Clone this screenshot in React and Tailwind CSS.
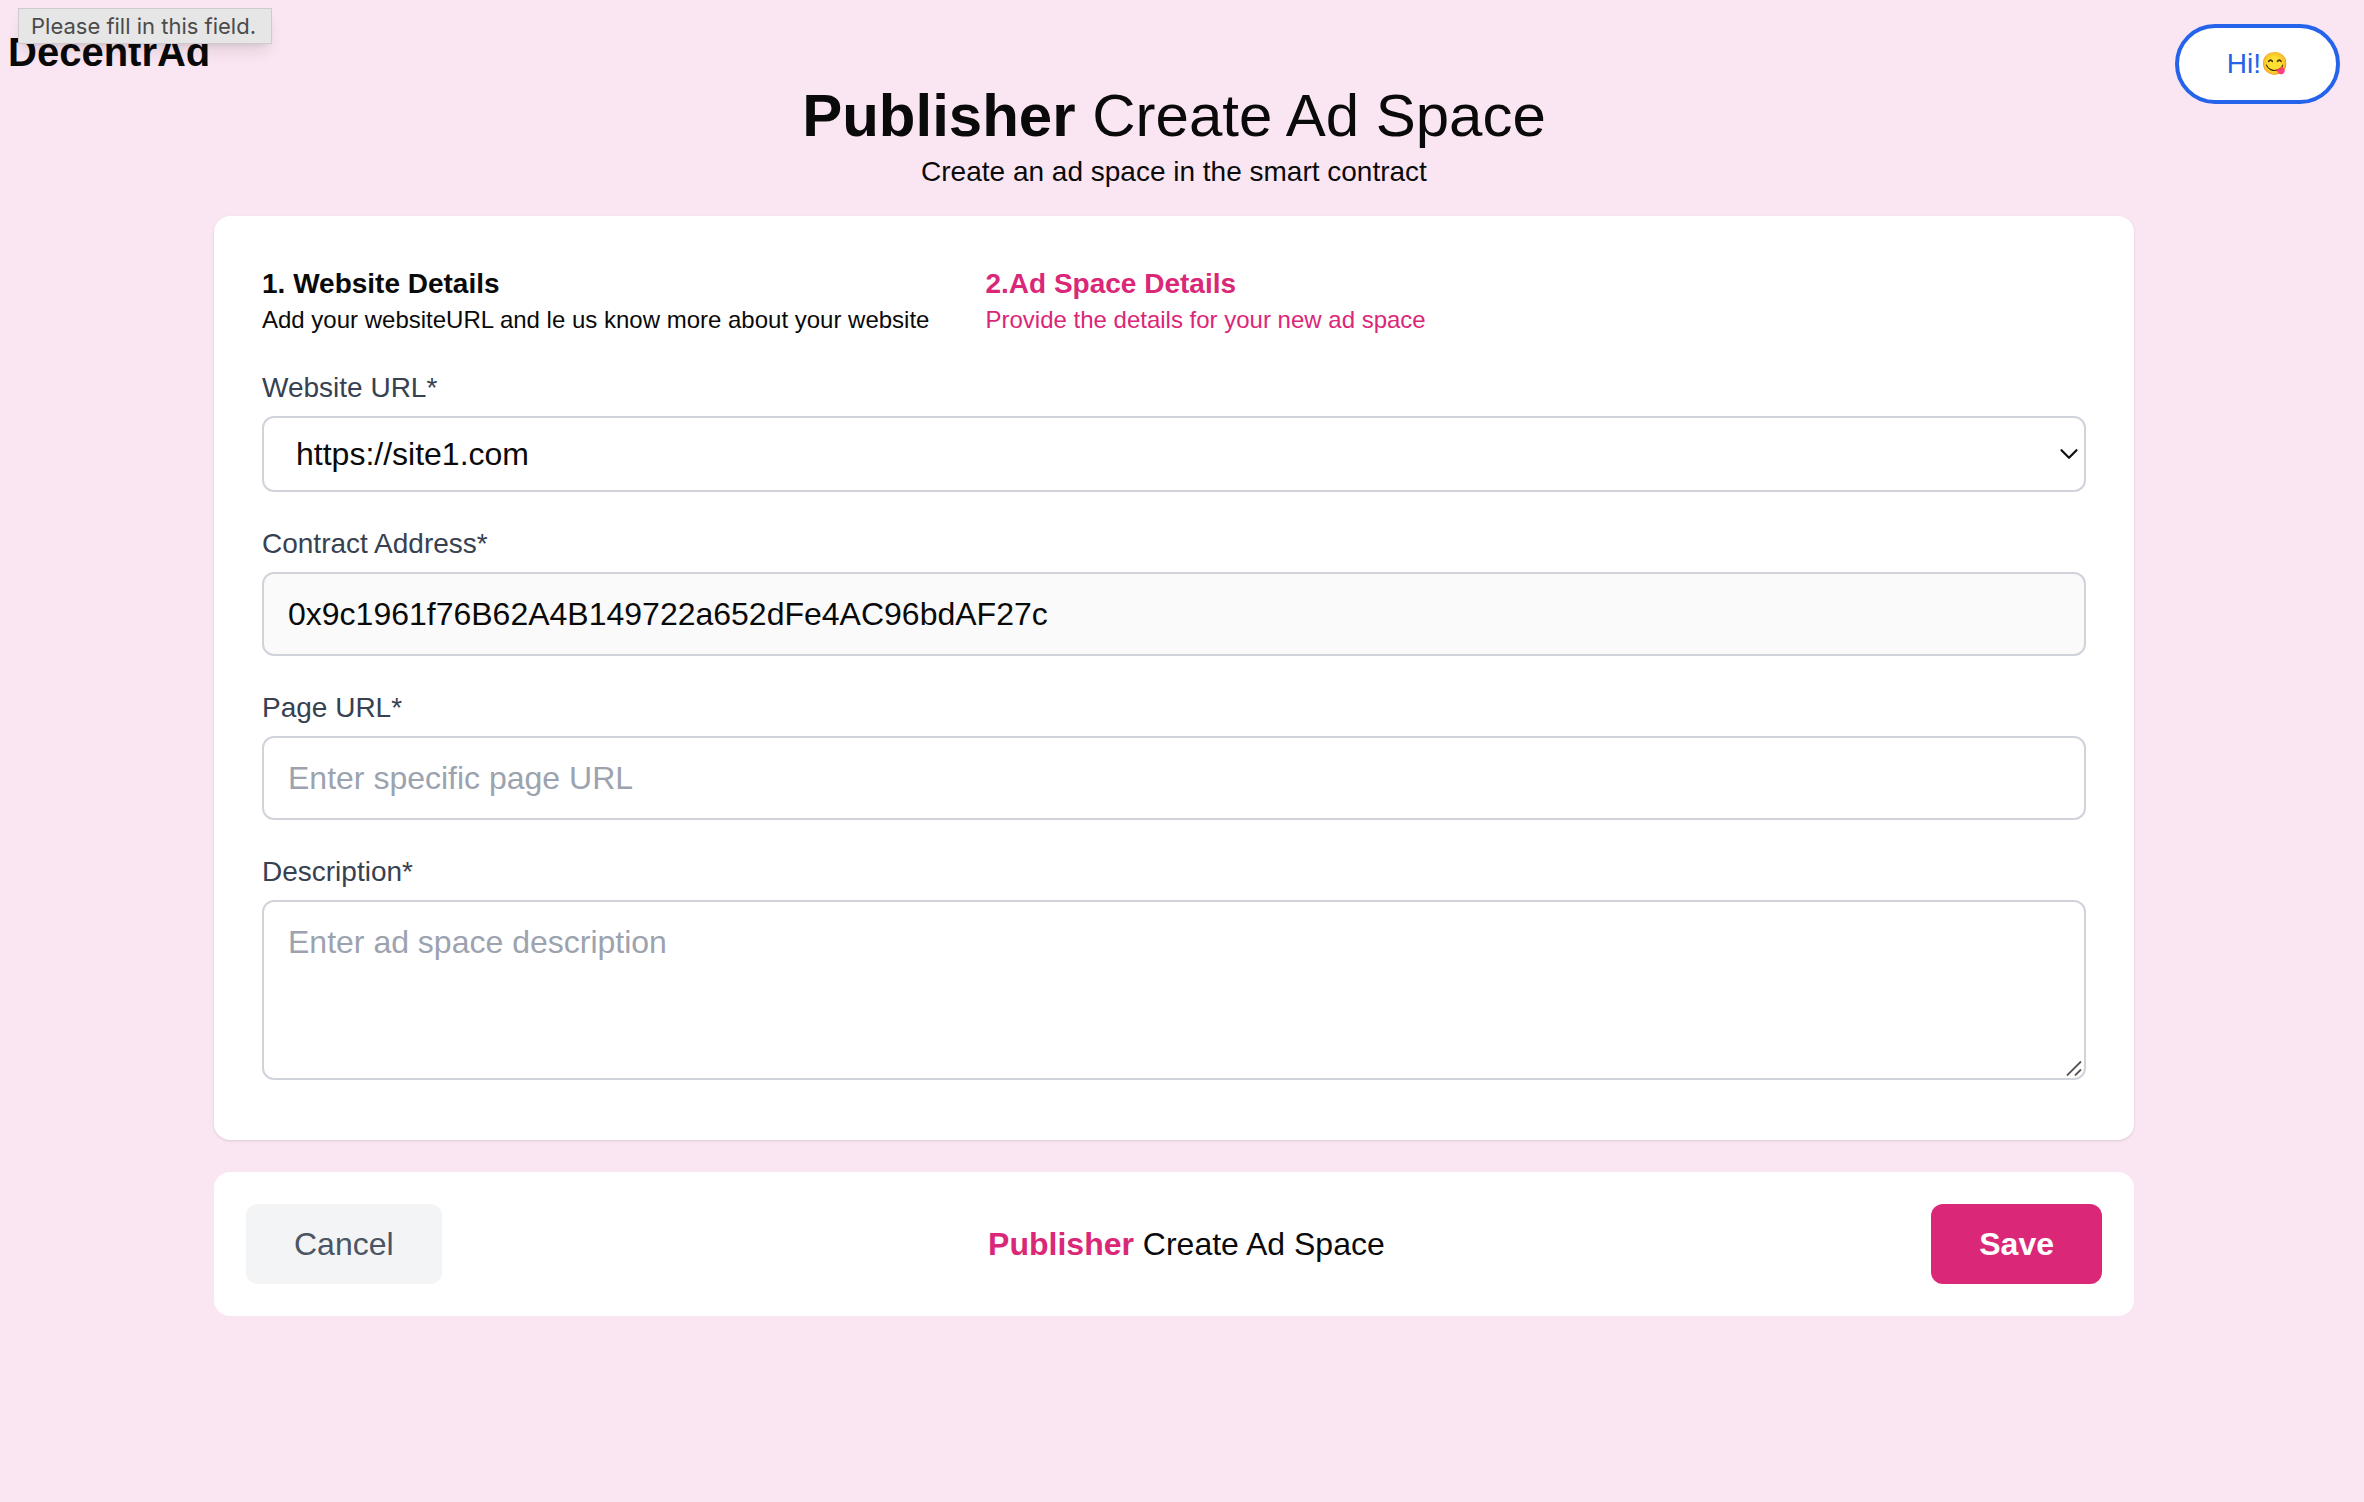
import React, { useState } from 'react';

const fieldClass = "w-full rounded-xl border-2 border-[#d1d3db] px-6 text-[32px] leading-[48px] text-[#0a0a0a] placeholder:text-[#9ca3af] outline-none";

const Field = ({ id, label, children }) => (
    <div className="flex flex-col gap-2">
        <label htmlFor={id} className="text-[28px] leading-10 text-[#374151]">{label}</label>
        {children}
    </div>
);

const Header = () => (
    <header className="grid grid-cols-[1fr_auto_1fr] items-start pl-2 pr-6 pt-6">
        <div className="relative justify-self-start">
            <a href="#" className="block text-[40px] leading-[56px] font-bold">DecentrAd</a>
            {/* Validation tooltip sits over the logo */}
            <div role="tooltip" className="absolute -top-4 left-2.5 w-[254px] border border-[#cfcacd] bg-[#e6e6e6] px-3 text-[22px] leading-[34px] whitespace-nowrap text-[#4b4b4b] shadow-lg font-[Inter,sans-serif]">
                Please fill in this field.
            </div>
        </div>

        <div className="pt-14 text-center">
            <h1 className="text-[60px] leading-[72px]">
                <span className="font-bold">Publisher</span> Create Ad Space
            </h1>
            <p className="text-[28px] leading-10">Create an ad space in the smart contract</p>
        </div>

        <button type="button" className="flex h-20 items-center justify-self-end rounded-full border-4 border-[#2563eb] bg-white px-12 text-[28px] leading-10 text-[#2563eb]">
            Hi!<span className="text-[22px]">😋</span>
        </button>
    </header>
);

const App = () => {
    const [site, setSite] = useState('https://site1.com');
    const [pageUrl, setPageUrl] = useState('');
    const [description, setDescription] = useState('');

    return (
        <div className="min-h-screen bg-[#fae6f2] pb-12 text-[#0a0a0a] font-['Liberation_Sans',Arial,sans-serif]">
            <Header />

            <form className="pt-6 pr-4" onSubmit={(e) => e.preventDefault()}>
                <div className="mx-auto flex max-w-[1920px] flex-col gap-8">
                    <section className="flex flex-col gap-8 rounded-2xl bg-white px-12 pt-12 pb-15 shadow">
                        <div className="flex gap-14">
                            <div>
                                <h2 className="text-[28px] leading-10 font-bold">1. Website Details</h2>
                                <p className="text-[24px] leading-8">Add your websiteURL and le us know more about your website</p>
                            </div>
                            <div className="text-[#db2777]">
                                <h2 className="text-[28px] leading-10 font-bold">2.Ad Space Details</h2>
                                <p className="text-[24px] leading-8">Provide the details for your new ad space</p>
                            </div>
                        </div>

                        <Field id="site" label="Website URL*">
                            <div className="relative flex">
                                <select
                                    id="site"
                                    value={site}
                                    onChange={(e) => setSite(e.target.value)}
                                    className="h-[76px] w-full appearance-none rounded-xl border-2 border-[#d1d3db] bg-white px-8 text-[32px] leading-[48px] outline-none"
                                >
                                    <option>https://site1.com</option>
                                    <option>https://site2.com</option>
                                </select>
                                <svg className="pointer-events-none absolute top-8 right-[7px] h-3 w-5" viewBox="0 0 20 12" fill="none" stroke="#111" strokeWidth="2.2" strokeLinecap="round" strokeLinejoin="round">
                                    <path d="M2.5 2.2 10 9.8 17.5 2.2" />
                                </svg>
                            </div>
                        </Field>

                        <Field id="contract" label="Contract Address*">
                            <input
                                id="contract"
                                type="text"
                                readOnly
                                value="0x9c1961f76B62A4B149722a652dFe4AC96bdAF27c"
                                className={`h-[84px] bg-[#fafafa] ${fieldClass}`}
                            />
                        </Field>

                        <Field id="page" label="Page URL*">
                            <input
                                id="page"
                                type="text"
                                placeholder="Enter specific page URL"
                                value={pageUrl}
                                onChange={(e) => setPageUrl(e.target.value)}
                                className={`h-[84px] bg-white ${fieldClass}`}
                            />
                        </Field>

                        <Field id="description" label="Description*">
                            <div className="relative flex">
                                <textarea
                                    id="description"
                                    placeholder="Enter ad space description"
                                    value={description}
                                    onChange={(e) => setDescription(e.target.value)}
                                    className={`h-[180px] resize-none bg-white py-4 ${fieldClass}`}
                                />
                                <svg className="pointer-events-none absolute right-1 bottom-1 h-4 w-4" viewBox="0 0 16 16" fill="none" stroke="#555" strokeWidth="1.8">
                                    <path d="M1 15.5 15 1.5M9 15.5 15 9.5" />
                                </svg>
                            </div>
                        </Field>
                    </section>

                    <section className="flex items-center justify-between rounded-2xl bg-white p-8 text-[32px] leading-[48px]">
                        <button type="button" className="h-20 rounded-xl bg-[#f3f4f6] px-12 text-[#4b5563]">Cancel</button>
                        <p><span className="font-bold text-[#db2777]">Publisher</span> Create Ad Space</p>
                        <button type="submit" className="h-20 rounded-xl bg-[#db2777] px-12 font-bold text-white">Save</button>
                    </section>
                </div>
            </form>
        </div>
    );
};

export default App;
